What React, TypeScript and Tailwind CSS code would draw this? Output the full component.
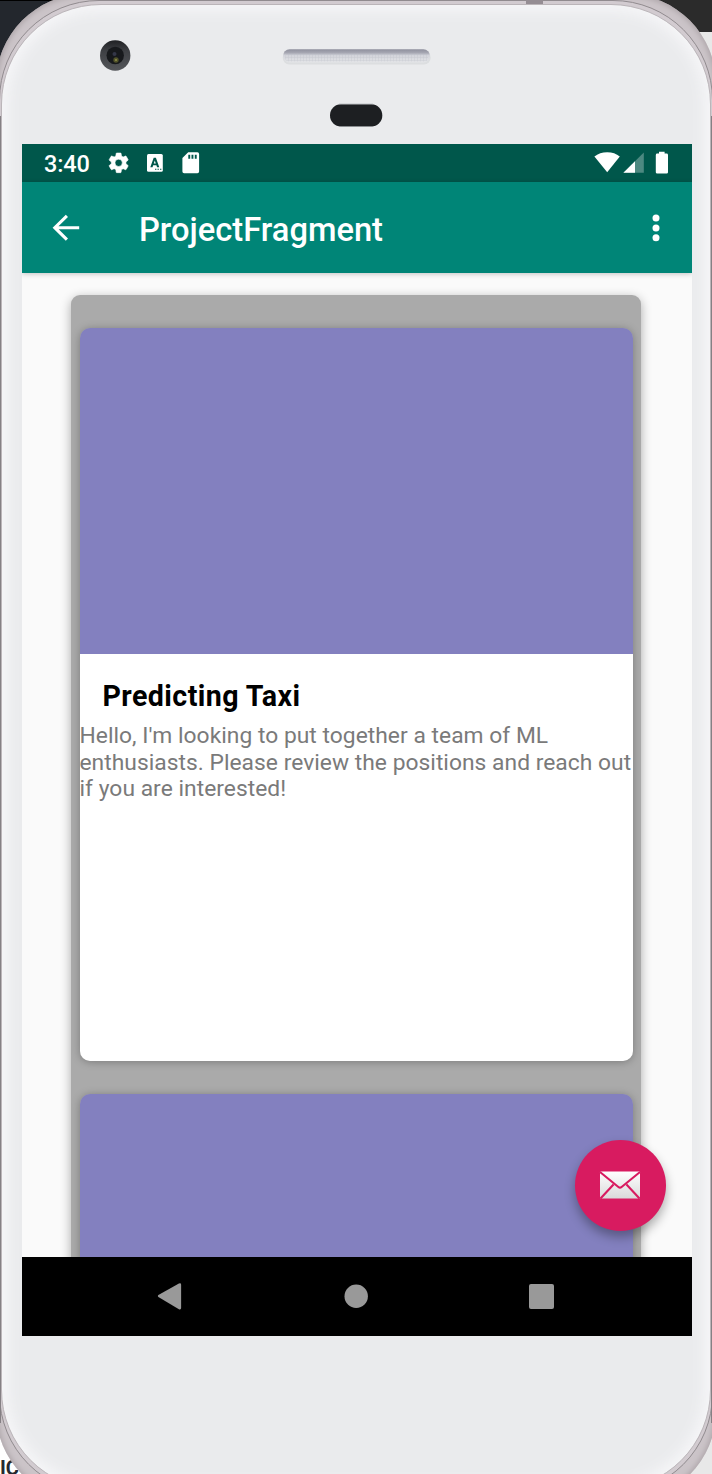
import React from "react";

function StatusBar() {
  return (
    <div className="flex h-[38px] shrink-0 items-center bg-[#00574b] pl-[22px] text-white">
      <span className="w-[64px] pt-[2px] text-[23.5px] font-medium leading-[37px] tracking-[-0.15px]">3:40</span>
      <svg className="h-[26px] w-[94px]" viewBox="108 150 94 26" fill="white">
        <g transform="translate(106.4 150.6) scale(1.02)">
          <path d="M19.14 12.94c.04-.3.06-.61.06-.94 0-.32-.02-.64-.07-.94l2.03-1.58c.18-.14.23-.41.12-.61l-1.92-3.32c-.12-.22-.37-.29-.59-.22l-2.39.96c-.5-.38-1.03-.7-1.62-.94L14.4 2.81c-.04-.24-.24-.41-.48-.41h-3.84c-.24 0-.43.17-.47.41l-.36 2.54c-.59.24-1.13.57-1.62.94l-2.39-.96c-.22-.08-.47 0-.59.22L2.74 8.87c-.12.21-.08.47.12.61l2.03 1.58c-.05.3-.09.63-.09.94s.02.64.07.94l-2.03 1.58c-.18.14-.23.41-.12.61l1.92 3.32c.12.22.37.29.59.22l2.39-.96c.5.38 1.03.7 1.62.94l.36 2.54c.05.24.24.41.48.41h3.84c.24 0 .44-.17.47-.41l.36-2.54c.59-.24 1.13-.56 1.62-.94l2.39.96c.22.08.47 0 .59-.22l1.92-3.32c.12-.22.07-.47-.12-.61l-2.01-1.58zM12 15.6a3.6 3.6 0 1 1 0-7.2 3.6 3.6 0 0 1 0 7.2z" stroke="white" strokeWidth=".6" />
        </g>
        <rect x="147" y="154" width="15.8" height="17.8" rx="1.5" />
        <path fillRule="evenodd" fill="#00574b" d="M150.3 167.3l3.4-9.6h2.2l3.4 9.6h-2.2l-.7-2h-3.2l-.7 2zM153.8 163.6h2l-1-3zM155 168.8h1.4v1h-1.4zM157.5 168.8h1.4v1h-1.4zM160 168.8h1.4v1h-1.4z" />
        <path d="M188.2 152.3h9.2a1.7 1.7 0 0 1 1.7 1.7v17.5a1.7 1.7 0 0 1-1.7 1.7h-13.3a1.7 1.7 0 0 1-1.7-1.7v-13.4z" />
        <path fill="#00574b" d="M188.3 154.7h1.9v4h-1.9zM191.5 154.7h1.9v4h-1.9zM194.8 154.7h1.9v4h-1.9z" />
      </svg>
      <svg className="ml-auto mr-[22px] h-[26px] w-[78px]" viewBox="592 150 78 26" fill="white">
        <path d="M607.2 172.2L594.4 156.6q5.3-4.3 12.8-4.3t12.6 4.3z" />
        <path fill="#4d8981" d="M643.8 152.5v20.3h-20.4z" />
        <path d="M635 161.3v11.5h-11.6z" />
        <path d="M659 151.8h5.6v1.8h2a1.4 1.4 0 0 1 1.4 1.4v17.2a1.4 1.4 0 0 1-1.4 1.4h-9.4a1.4 1.4 0 0 1-1.4-1.4V155a1.4 1.4 0 0 1 1.4-1.4h1.8z" />
      </svg>
    </div>
  );
}

function AppBar() {
  return (
    <header className="relative z-10 flex h-[91px] shrink-0 items-center bg-[#008577] text-white shadow-[0_1px_5px_rgba(0,0,0,0.22)]">
      <svg className="ml-[30px] h-[28px] w-[28px]" viewBox="52.4 213.3 28 28" fill="none" stroke="white" strokeWidth="3.1">
        <path d="M79.6 227H55M67.3 215.1L55.2 227l12.1 12" />
      </svg>
      <h1 className="ml-[59px] mt-[4px] text-[32.7px] font-medium leading-[40px]">ProjectFragment</h1>
      <svg className="ml-auto mr-[32px] mt-px h-[30px] w-[8px]" viewBox="0 0 8 30" fill="white">
        <circle cx="4" cy="5.1" r="3.5" />
        <circle cx="4" cy="15" r="3.5" />
        <circle cx="4" cy="24.8" r="3.5" />
      </svg>
    </header>
  );
}

function ProjectCard({ title, body }: { title: string; body: string }) {
  return (
    <article className="h-[733px] shrink-0 overflow-hidden rounded-[10px] bg-[linear-gradient(#8380bf_326px,#ffffff_326px)] pt-[351px] shadow-[0_1px_9px_rgba(0,0,0,0.28)]">
      <h2 className="pl-[23px] text-[28.6px] font-bold leading-[34px] tracking-[0.42px] text-black">{title}</h2>
      <p className="mt-[10.5px] whitespace-nowrap text-[22.8px] leading-[26.7px] tracking-[0.03px] text-[#7a7a7a]">
        {body.split("\n").map((line) => (
          <span key={line} className="block">{line}</span>
        ))}
      </p>
    </article>
  );
}

function NavBar() {
  return (
    <nav className="flex h-[79px] shrink-0 items-center bg-black">
      <svg className="ml-[135px] h-[28px] w-[26px]" viewBox="157 1282.5 26 28" fill="#999">
        <path d="M158.4 1294.6q-1 .9 0 1.9l20.5 12.2q2.2.8 2.2-1.2v-23.4q0-2-2.2-1.2z" />
      </svg>
      <svg className="ml-[160px] h-[26px] w-[26px]" viewBox="0 0 26 26">
        <circle cx="13.2" cy="12.2" r="11.7" fill="#999" />
      </svg>
      <div className="mb-px ml-[160px] h-[25px] w-[25px] rounded-[2px] bg-[#999]" />
    </nav>
  );
}

function PhoneHardware() {
  return (
    <div className="flex h-[144px] shrink-0">
      <svg className="h-[144px] w-[712px]" viewBox="0 0 712 144">
        <defs>
          <linearGradient id="speaker" x2="0" y2="1">
            <stop offset="0" stopColor="#8f909d" />
            <stop offset=".28" stopColor="#a7a8b3" />
            <stop offset=".45" stopColor="#d2d3da" />
            <stop offset="1" stopColor="#e4e5e8" />
          </linearGradient>
          <linearGradient id="lens" x2="0" y2="1">
            <stop offset="0" stopColor="#202124" />
            <stop offset=".35" stopColor="#3e4044" />
            <stop offset="1" stopColor="#54565a" />
          </linearGradient>
          <pattern id="mesh" width="3" height="3" patternUnits="userSpaceOnUse">
            <path d="M0 .5h3M.5 0v3" stroke="#b9bbc5" strokeWidth=".5" opacity=".5" />
          </pattern>
        </defs>
        <circle cx="115.2" cy="55.5" r="15.2" fill="url(#lens)" />
        <circle cx="115.2" cy="55.5" r="8.7" fill="#17191c" />
        <circle cx="114.5" cy="54" r="2" fill="#343748" />
        <circle cx="116" cy="60" r="2.7" fill="#51522a" />
        <circle cx="116" cy="60" r="1" fill="#91904a" />
        <rect x="282.7" y="51" width="148" height="13.5" rx="6.7" fill="#dcdee0" />
        <rect x="283" y="49.3" width="147" height="13.2" rx="6.6" fill="url(#speaker)" />
        <rect x="285" y="53.5" width="143" height="8" rx="4" fill="url(#mesh)" />
        <rect x="330" y="104.2" width="52.3" height="22.3" rx="11" fill="#1d1f22" />
        <path d="M339 104.2h34M339 126.5h34" stroke="#8e9094" strokeWidth=".7" />
      </svg>
    </div>
  );
}

export default function App() {
  return (
    <div className="relative h-[1474px] w-[712px] overflow-hidden bg-white font-[Roboto,sans-serif]">
      <div className="absolute left-0 top-0 h-[100px] w-[200px] border-t border-black bg-[#23272d]" />
      <div className="absolute right-0 top-0 h-[32px] w-[200px] bg-[#2b2b2b]" />
      <div className="absolute right-0 top-[32px] h-[1442px] w-[200px] bg-[#e8e8e8]" />
      <span className="absolute left-0 top-[1455px] text-[20px] font-bold leading-[26px] text-[#252a30]">IC</span>

      <div className="absolute left-[-4px] top-[-6px] h-[1507px] w-[720px] rounded-[90px] bg-[#cbc4c8] shadow-[inset_0_0_5px_2px_#b0a8ac]" />
      <div className="absolute left-[-1px] top-[0px] h-[1494px] w-[714px] rounded-[100px] border border-[#918b8f] bg-[#d2cbd0]" />
      <div className="absolute left-0 top-[116px] h-[1307px] w-[1px] bg-[#858084]" />
      <div className="absolute right-0 top-[116px] h-[1307px] w-[1px] bg-[#858084]" />
      <div className="absolute left-[526px] top-0 h-[4px] w-[17px] bg-[#958d93]" />
      <div className="absolute left-px top-[4px] h-[1486px] w-[710px] rounded-[100px] border border-[#bbb5b9] bg-[#eaebed] shadow-[inset_0_0_14px_6px_#f6f6f8]" />

      <div className="relative flex h-full flex-col">
        <PhoneHardware />
        <main className="relative ml-[22px] flex h-[1192px] w-[670px] flex-col overflow-hidden bg-[#fafafa]">
          <StatusBar />
          <AppBar />
          <section className="h-[984px] shrink-0 overflow-hidden px-[49px] pt-[22px]">
            <div className="flex h-[1100px] w-[570px] flex-col gap-[33px] rounded-[9px] bg-[#aaa] px-[8.5px] pt-[32.5px] shadow-[0_3px_11px_rgba(0,0,0,0.32)]">
              <ProjectCard title="Predicting Taxi" body={"Hello, I'm looking to put together a team of ML\nenthusiasts. Please review the positions and reach out\nif you are interested!"} />
              <ProjectCard title="" body="" />
            </div>
          </section>
          <NavBar />
          <button aria-label="Messages" className="absolute left-[552.5px] top-[995.5px] flex h-[91px] w-[91px] items-center justify-center rounded-full bg-[#d81b60] shadow-[0_6px_11px_rgba(0,0,0,0.32)]">
            <svg className="h-[30px] w-[42px]" viewBox="0 0 42 30">
              <defs>
                <linearGradient id="paper" x2="0" y2="1">
                  <stop offset="0" stopColor="#fff" />
                  <stop offset="1" stopColor="#dadada" />
                </linearGradient>
              </defs>
              <rect x="1" y="1.5" width="40" height="27" rx="1" fill="url(#paper)" />
              <path d="M1 2l18.4 15q1.6 1.3 3.2 0L41 2M1.5 28.5L14.5 14.5M40.5 28.5L27.5 14.5" fill="none" stroke="#d81b60" strokeWidth="2.1" />
            </svg>
          </button>
        </main>
      </div>
    </div>
  );
}
